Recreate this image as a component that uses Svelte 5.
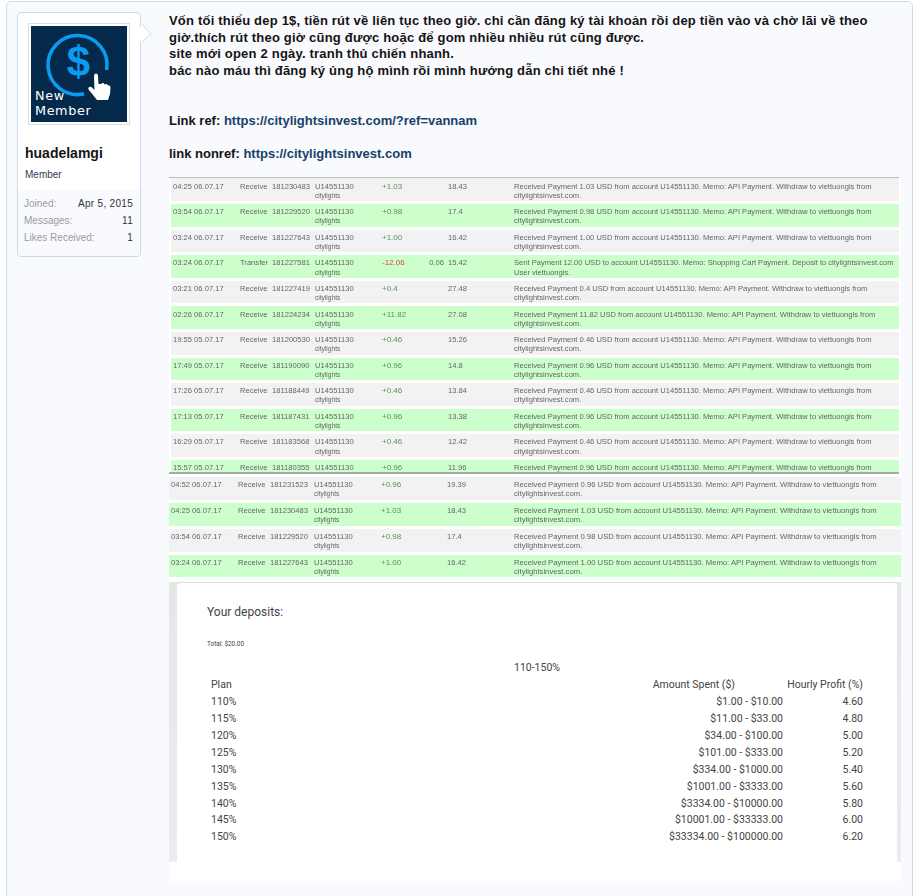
<script>
  const top = [
    ['04:25 06.07.17', 'Receive', '181230483', '+1.03', '', '18.43', 'Received Payment 1.03 USD from account U14551130. Memo: API Payment. Withdraw to viettuongls from', 'citylightsinvest.com.'],
    ['03:54 06.07.17', 'Receive', '181229520', '+0.98', '', '17.4', 'Received Payment 0.98 USD from account U14551130. Memo: API Payment. Withdraw to viettuongls from', 'citylightsinvest.com.'],
    ['03:24 06.07.17', 'Receive', '181227643', '+1.00', '', '16.42', 'Received Payment 1.00 USD from account U14551130. Memo: API Payment. Withdraw to viettuongls from', 'citylightsinvest.com.'],
    ['03:24 06.07.17', 'Transfer', '181227581', '-12.06', '0.06', '15.42', 'Sent Payment 12.00 USD to account U14551130. Memo: Shopping Cart Payment. Deposit to citylightsinvest.com', 'User viettuongls.'],
    ['03:21 06.07.17', 'Receive', '181227419', '+0.4', '', '27.48', 'Received Payment 0.4 USD from account U14551130. Memo: API Payment. Withdraw to viettuongls from', 'citylightsinvest.com.'],
    ['02:26 06.07.17', 'Receive', '181224234', '+11.82', '', '27.08', 'Received Payment 11.82 USD from account U14551130. Memo: API Payment. Withdraw to viettuongls from', 'citylightsinvest.com.'],
    ['19:55 05.07.17', 'Receive', '181200530', '+0.46', '', '15.26', 'Received Payment 0.46 USD from account U14551130. Memo: API Payment. Withdraw to viettuongls from', 'citylightsinvest.com.'],
    ['17:49 05.07.17', 'Receive', '181190090', '+0.96', '', '14.8', 'Received Payment 0.96 USD from account U14551130. Memo: API Payment. Withdraw to viettuongls from', 'citylightsinvest.com.'],
    ['17:26 05.07.17', 'Receive', '181188449', '+0.46', '', '13.84', 'Received Payment 0.46 USD from account U14551130. Memo: API Payment. Withdraw to viettuongls from', 'citylightsinvest.com.'],
    ['17:13 05.07.17', 'Receive', '181187431', '+0.96', '', '13.38', 'Received Payment 0.96 USD from account U14551130. Memo: API Payment. Withdraw to viettuongls from', 'citylightsinvest.com.'],
    ['16:29 05.07.17', 'Receive', '181183568', '+0.46', '', '12.42', 'Received Payment 0.46 USD from account U14551130. Memo: API Payment. Withdraw to viettuongls from', 'citylightsinvest.com.'],
    // the screenshot is cropped through this row, its second line doesn't show
    ['15:57 05.07.17', 'Receive', '181180355', '+0.96', '', '11.96', 'Received Payment 0.96 USD from account U14551130. Memo: API Payment. Withdraw to viettuongls from', '']
  ];
  const bottom = [
    ['04:52 06.07.17', 'Receive', '181231523', '+0.96', '', '19.39', 'Received Payment 0.96 USD from account U14551130. Memo: API Payment. Withdraw to viettuongls from', 'citylightsinvest.com.'],
    ['04:25 06.07.17', 'Receive', '181230483', '+1.03', '', '18.43', 'Received Payment 1.03 USD from account U14551130. Memo: API Payment. Withdraw to viettuongls from', 'citylightsinvest.com.'],
    ['03:54 06.07.17', 'Receive', '181229520', '+0.98', '', '17.4', 'Received Payment 0.98 USD from account U14551130. Memo: API Payment. Withdraw to viettuongls from', 'citylightsinvest.com.'],
    ['03:24 06.07.17', 'Receive', '181227643', '+1.00', '', '16.42', 'Received Payment 1.00 USD from account U14551130. Memo: API Payment. Withdraw to viettuongls from', 'citylightsinvest.com.']
  ];
  const plans = [
    ['110%', '$1.00 - $10.00', '4.60'],
    ['115%', '$11.00 - $33.00', '4.80'],
    ['120%', '$34.00 - $100.00', '5.00'],
    ['125%', '$101.00 - $333.00', '5.20'],
    ['130%', '$334.00 - $1000.00', '5.40'],
    ['135%', '$1001.00 - $3333.00', '5.60'],
    ['140%', '$3334.00 - $10000.00', '5.80'],
    ['145%', '$10001.00 - $33333.00', '6.00'],
    ['150%', '$33334.00 - $100000.00', '6.20']
  ];
</script>

{#snippet txRows(rows, tone)}
  {#each rows as r, i}
    <div class="tx" class:green={i % 2 === tone}>
      <span>{r[0]}</span>
      <span>{r[1]}</span>
      <span>{r[2]}</span>
      <span class="acct">U14551130{#if r[7]}<small>citylights</small>{/if}</span>
      <span class="amount" class:neg={r[3][0] === '-'}>{r[3]}</span>
      <span class="fee">{r[4]}</span>
      <span>{r[5]}</span>
      <span class="memo">{r[6]}{#if r[7]}<br />{r[7]}{/if}</span>
    </div>
  {/each}
{/snippet}

<div class="page">
  <div class="message">
    <aside class="user">
      <div class="avatar">
        <svg viewBox="0 0 96 96" width="96" height="96">
          <rect width="96" height="96" fill="#05294a" />
          <path d="M75.6 44 A29.5 29.5 0 1 0 53 67.8" fill="none" stroke="#0a9cf0" stroke-width="3.6" />
          <text x="47.5" y="50" class="dollar">$</text>
          <path d="M63 50 C63 46.5 67 46.5 67 50 L67.5 58 L70 58 C71.5 56.5 73 57 73.5 58.5 C75 57.5 76.5 58 77 59.5 C78 59 79.5 60 79.5 62 L79 68 L77 74 L66 74 L62 69 L57.5 63.5 C56.5 61 59.5 60 61 61.5 L63.5 64 Z" fill="#fff" />
          <text x="4" y="74" class="new">New</text>
          <text x="4" y="89" class="new">Member</text>
        </svg>
      </div>
      <h3 class="name">huadelamgi</h3>
      <div class="title">Member</div>
      <dl class="stats">
        <div><dt>Joined:</dt><dd>Apr 5, 2015</dd></div>
        <div><dt>Messages:</dt><dd>11</dd></div>
        <div><dt>Likes Received:</dt><dd>1</dd></div>
      </dl>
      <span class="arrow"></span>
    </aside>

    <main class="content">
      <div class="post">
        <span class="viet">
          Vốn tối thiểu dep 1$, tiền rút về liên tục theo giờ. chỉ cần đăng ký tài khoản rồi dep tiền vào và chờ lãi về theo<br />
          giờ.thích rút theo giờ cũng được hoặc để gom nhiều nhiều rút cũng được.<br />
          site mới open 2 ngày. tranh thủ chiến nhanh.<br />
          bác nào máu thì đăng ký ủng hộ mình rồi mình hướng dẫn chi tiết nhé !<br />
        </span>
        <br />
        <br />
        Link ref: <a href="#ref">https://citylightsinvest.com/?ref=vannam</a><br />
        <br />
        link nonref: <a href="#nonref">https://citylightsinvest.com</a>
      </div>

      <div class="shots">
        <div class="shot first">
          {@render txRows(top, 1)}
        </div>
        <div class="shot second">
          {@render txRows(bottom, 1)}
        </div>
        <div class="deposits">
          <div class="sheet">
            <div class="heading">Your deposits:</div>
            <div class="total">Total: $20.00</div>
            <div class="range">110-150%</div>
            <div class="plans">
              <div class="plan head">
                <span>Plan</span>
                <span class="spent">Amount Spent ($)</span>
                <span>Hourly Profit (%)</span>
              </div>
              {#each plans as p}
                <div class="plan">
                  <span>{p[0]}</span>
                  <span>{p[1]}</span>
                  <span>{p[2]}</span>
                </div>
              {/each}
            </div>
          </div>
        </div>
        <div class="shot-end"></div>
      </div>
    </main>
  </div>
</div>

<style>
  :global(body) {
    background: #fff;
  }

  .page {
    height: 896px;
    overflow: hidden;
    padding: 1px 9px 0 6px;
    box-sizing: border-box;
    font-family: "Liberation Sans", Arial, sans-serif;
  }

  .message {
    display: flex;
    align-items: flex-start;
    height: 960px;
    box-sizing: border-box;
    padding: 10px 10px 0;
    background: #f9fafd;
    border: 1px solid #c9dcef;
    border-radius: 5px;
  }

  .user {
    position: relative;
    flex: none;
    width: 124px;
    box-sizing: border-box;
    background: #fff;
    border: 1px solid #c9dcef;
    border-radius: 4px;
    padding-top: 10px;
  }

  .arrow {
    position: absolute;
    top: 9px;
    right: -10px;
    width: 14px;
    height: 14px;
    margin-top: 4px;
    background: #fff;
    border-top: 1px solid #c9dcef;
    border-right: 1px solid #c9dcef;
    transform: rotate(45deg) scale(0.85);
  }

  .avatar {
    width: 96px;
    height: 96px;
    margin-left: 10px;
    border: 1px solid #ddd;
    padding: 2px;
    background: #fff;
    line-height: 0;
  }

  .dollar {
    font: 700 42px "Liberation Sans", sans-serif;
    fill: #0a9cf0;
    text-anchor: middle;
  }

  .new {
    font: 400 12.8px "DejaVu Sans", sans-serif;
    letter-spacing: 0.6px;
    fill: #fff;
  }

  .name {
    margin: 20px 0 0 7px;
    font-size: 14px;
    line-height: 17px;
    font-weight: 700;
    color: #141414;
  }

  .title {
    margin: 6px 0 0 7px;
    font-size: 10px;
    line-height: 14px;
    color: #333c50;
  }

  .stats {
    margin: 8px 0 0;
    padding: 6px 7px 9px 6px;
    background: #f9fafd;
    border-radius: 0 0 4px 4px;
    font-size: 10px;
  }

  .stats div {
    display: flex;
    justify-content: space-between;
    height: 17px;
    line-height: 15px;
  }

  .stats dt {
    color: #9a9a9a;
  }

  .stats dd {
    margin: 0;
    color: #333;
    letter-spacing: 0.3px;
  }

  .content {
    flex: none;
    width: 732px;
    margin-left: 28px;
  }

  .post {
    padding-top: 1px;
    font-size: 13px;
    line-height: 16.6px;
    font-weight: 700;
    color: #141414;
    white-space: nowrap;
  }

  .viet {
    letter-spacing: 0.2px;
  }

  .post a {
    color: #17416b;
    text-decoration: none;
  }

  .shots {
    margin-top: 15px;
    width: 732px;
    background: #fff;
  }

  .shot {
    font-size: 7.6px;
    color: #666;
    filter: blur(0.3px);
    white-space: nowrap;
  }

  .first {
    height: 294px;
    overflow: hidden;
    padding-left: 2px;
    width: 728px;
    border-top: 1px solid #bbb;
    border-bottom: 2px solid #aaa;
  }

  .second {
    width: 732px;
    padding: 2.5px 0 1.9px;
  }

  .tx {
    display: grid;
    grid-template-columns: 67px 32px 43px 67px 38px 28px 66px 1fr;
    height: 22.6px;
    margin-bottom: 3px;
    padding: 3.2px 0 0 2px;
    background: #f2f2f2;
    line-height: 9.2px;
    box-sizing: border-box;
  }

  .second .tx {
    grid-template-columns: 67px 32px 44px 67px 38px 28px 67px 1fr;
    height: 22.9px;
  }

  .tx.green {
    background: #ccffcc;
  }

  .acct small {
    display: block;
    font-size: 6.6px;
    line-height: 9px;
  }

  .fee {
    text-align: right;
    padding-right: 4px;
  }

  .amount {
    color: #5b8f5b;
    font-size: 8px;
  }

  .amount.neg {
    color: #e0463c;
  }

  .memo {
    font-size: 7.57px;
  }

  .second .memo {
    font-size: 7.68px;
  }

  .deposits {
    padding: 0 4px 0 8px;
    height: 280px;
    background: linear-gradient(#e6e6e6, #ececec);
    font-family: Roboto, sans-serif;
    color: #444;
  }

  .sheet {
    height: 280px;
    background: #fff;
    border-top: 1px solid #ddd;
    border-radius: 3px 3px 0 0;
    box-sizing: border-box;
    padding: 21px 34px 0 30px;
  }

  .heading {
    font-size: 12px;
    line-height: 16px;
  }

  .total {
    margin-top: 20px;
    font-size: 6.4px;
    line-height: 8px;
  }

  .range {
    margin-top: 13px;
    padding-left: 307px;
    font-size: 10.5px;
    line-height: 14px;
  }

  .plans {
    margin-top: 2px;
    font-size: 10.5px;
  }

  .plan {
    display: grid;
    grid-template-columns: 100px 472px 80px;
    height: 16.9px;
    line-height: 16.9px;
    padding-left: 4px;
  }

  .plan span:nth-child(2),
  .plan span:nth-child(3) {
    text-align: right;
  }

  .plan .spent {
    padding-right: 48px;
  }

  .shot-end {
    height: 19px;
  }
</style>
